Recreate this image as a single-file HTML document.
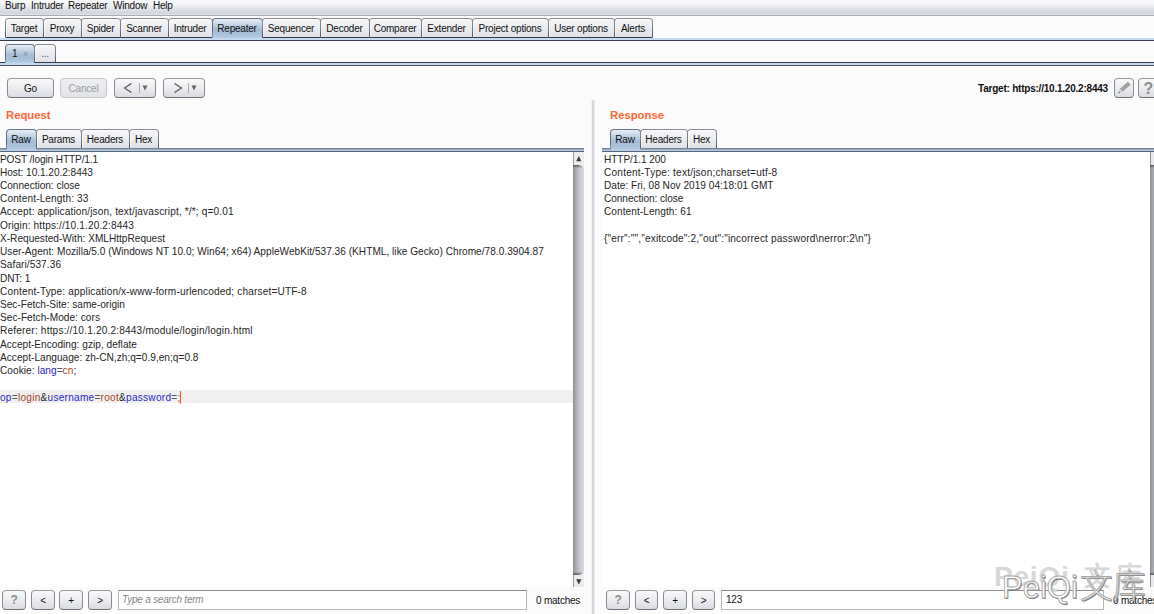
<!DOCTYPE html>
<html lang="en">
<head>
<meta charset="utf-8">
<title>Burp Suite Repeater</title>
<style>
html,body{margin:0;padding:0;}
body{width:1154px;height:614px;overflow:hidden;position:relative;background:#fbfbfb;
  font-family:"Liberation Sans",sans-serif;font-size:10px;letter-spacing:-0.22px;color:#000;}
.abs{position:absolute;}
/* menu bar */
#menubar{left:0;top:0;width:1154px;height:15px;background:linear-gradient(#fafafa 0%,#f6f7f8 15%,#eceef1 38%,#dcdfe4 65%,#d4d7de 85%,#d6d9df 92%,#e2e4e8 100%);border-bottom:1px solid #a9adb6;}
#menubar span{position:absolute;top:0px;font-size:10px;line-height:11px;color:#111;white-space:pre;}
/* tabs */
.tab{position:absolute;box-sizing:border-box;border:1px solid transparent;border-bottom:1px solid #363b4b;border-radius:4px 4px 0 0;
  background:linear-gradient(#f6f7f8 0%,#eceef1 45%,#dfe1e6 100%) padding-box,linear-gradient(#8a8c92 0%,#7a7c86 50%,#4c4e5e 100%) border-box;
  text-align:center;white-space:pre;color:#111;box-shadow:inset 1px 1px 0 rgba(255,255,255,.55);}
.tab.sel{border-bottom:none;box-shadow:none;background:linear-gradient(#e8eef5 0%,#c6d6e7 27%,#a6bcd5 56%,#a9c0d9 80%,#b7cde4 100%) padding-box,linear-gradient(#6a7488 0%,#56607a 60%,#8fa3bd 100%) border-box;}
.mt{top:18px;height:20px;line-height:19px;font-size:10px;padding-right:1px;}
.st{top:44px;height:19px;line-height:17px;font-size:10px;}
.pt{top:129px;height:20px;line-height:19px;font-size:10px;border-bottom-color:#7b8394;padding-right:1px;}
.pt.sel{height:21px;}
.band{position:absolute;height:2px;background:#c3d9ee;}
.dark{position:absolute;height:1px;background:#363b4b;}
/* buttons */
.btn{position:absolute;box-sizing:border-box;border:1px solid #8e9096;border-color:#9a9ca2 #8a8c92 #6e7078;border-radius:4px;
  background:linear-gradient(#f9f9fa 0%,#ebecef 50%,#dadce2 100%);text-align:center;white-space:pre;color:#111;
  box-shadow:0 1px 0 rgba(255,255,255,.8);}
.btn.dis{color:#9a9ca3;background:linear-gradient(#eeeff1,#e1e3e7);border-color:#c3c5ca;}
.title{position:absolute;font-weight:bold;font-size:11.3px;letter-spacing:0;color:#ff6633;line-height:13px;}
/* text areas */
.ta{position:absolute;background:#fff;overflow:hidden;}
.ta pre{margin:0;font-family:"Liberation Sans",sans-serif;font-size:10.1px;line-height:13.22px;color:#262626;white-space:pre;letter-spacing:0;}
.k{color:#2828c8;}
.v{color:#a0481c;}
.q{color:#555;}
.sb{position:absolute;background:linear-gradient(90deg,#9c9fa8 0%,#c6c8ce 30%,#dfe0e4 100%);}
.field{position:absolute;box-sizing:border-box;background:#fff;border:1px solid #b4b6bb;border-top-color:#8b8d93;font-size:10px;line-height:17px;padding-left:4px;}
.lbl{position:absolute;font-size:10px;line-height:11px;white-space:pre;color:#111;}
</style>
</head>
<body>
<!-- menu bar -->
<div id="menubar" class="abs">
  <span style="left:5px">Burp</span><span style="left:31px">Intruder</span><span style="left:68px">Repeater</span><span style="left:113px">Window</span><span style="left:153px">Help</span>
</div>

<!-- main tabs -->
<div class="tab mt" style="left:5px;width:39px">Target</div>
<div class="tab mt" style="left:43px;width:39px">Proxy</div>
<div class="tab mt" style="left:81px;width:40px">Spider</div>
<div class="tab mt" style="left:120px;width:49px">Scanner</div>
<div class="tab mt" style="left:168px;width:45px">Intruder</div>
<div class="tab mt sel" style="left:212px;width:51px">Repeater</div>
<div class="tab mt" style="left:262px;width:59px">Sequencer</div>
<div class="tab mt" style="left:320px;width:50px">Decoder</div>
<div class="tab mt" style="left:369px;width:53px">Comparer</div>
<div class="tab mt" style="left:421px;width:52px">Extender</div>
<div class="tab mt" style="left:472px;width:77px">Project options</div>
<div class="tab mt" style="left:548px;width:67px">User options</div>
<div class="tab mt" style="left:614px;width:39px">Alerts</div>
<div class="band" style="left:0;top:38px;width:1154px;z-index:-1"></div>
<div class="dark" style="left:0;top:40px;width:1154px"></div>

<!-- sub tabs -->
<div class="tab st sel" style="left:5px;width:30px;text-align:left;padding-left:6px">1 <span style="color:#8a8f99;font-size:9px;padding-left:3px">×</span></div>
<div class="tab st" style="left:34px;width:22px;color:#555">...</div>
<div class="dark" style="left:0;top:62px;width:1154px;height:1px;z-index:-1"></div>
<div class="band" style="left:0;top:63px;width:1154px;height:2px;z-index:-1"></div>
<div class="abs" style="left:0;top:65px;width:1154px;height:1px;background:#4a4e5c"></div>
<div class="abs" style="left:0;top:66px;width:1154px;height:1px;background:#fff"></div>

<!-- toolbar buttons -->
<div class="btn" style="left:7px;top:78px;width:47px;height:20px;line-height:19.5px">Go</div>
<div class="btn dis" style="left:60px;top:78px;width:47px;height:20px;line-height:19.5px">Cancel</div>
<div class="btn" style="left:114px;top:78px;width:42px;height:20px;line-height:18px"><svg width="40" height="18" viewBox="0 0 40 18"><path d="M16.5 4.5 L9.5 9 L16.5 13.5" fill="none" stroke="#555" stroke-width="1.2"/><path d="M24.5 4v10" stroke="#aaa" stroke-width="1"/><path d="M27.5 6.5h5l-2.5 5z" fill="#666"/></svg></div>
<div class="btn" style="left:163px;top:78px;width:42px;height:20px;line-height:18px"><svg width="40" height="18" viewBox="0 0 40 18"><path d="M10.5 4.5 L17.5 9 L10.5 13.5" fill="none" stroke="#555" stroke-width="1.2"/><path d="M24.5 4v10" stroke="#aaa" stroke-width="1"/><path d="M27.5 6.5h5l-2.5 5z" fill="#666"/></svg></div>

<!-- target label -->
<div class="lbl" style="left:978px;top:83px;font-weight:bold;font-size:10px">Target: https://10.1.20.2:8443</div>
<div class="btn" style="left:1114px;top:78px;width:20px;height:20px"><svg width="18" height="18" viewBox="0 0 18 18" style="display:block"><path d="M4.83 9.74 L12.93 2.74 L15.67 5.66 L7.57 12.66 Z" fill="#9e9e9e"/><path d="M4.83 9.74 L7.57 12.66 L3.2 14.4 Z" fill="#d4d4d6"/><path d="M4.3 12.2 L5.6 13.5 L3.1 14.6 Z" fill="#777"/><path d="M6.2 8.6 L9 11.4 M8 7 L10.8 9.8 M9.8 5.4 L12.6 8.2 M11.6 3.9 L14.4 6.7" stroke="#b9b9b9" stroke-width="0.5"/></svg></div>
<div class="btn" style="left:1138px;top:78px;width:20px;height:20px;line-height:19px;font-size:16px;font-weight:bold;color:#8c8c8c;text-align:left;padding-left:4.5px;letter-spacing:0">?</div>

<!-- request panel -->
<div class="title" style="left:6px;top:109px">Request</div>
<div class="tab pt sel" style="left:6px;width:31px">Raw</div>
<div class="tab pt" style="left:36px;width:46px">Params</div>
<div class="tab pt" style="left:81px;width:49px">Headers</div>
<div class="tab pt" style="left:129px;width:30px">Hex</div>
<div class="abs" style="left:0;top:148px;width:584px;height:4px;z-index:-1;background:linear-gradient(#7b8394 0,#7b8394 1px,#94a8c2 1px,#94a8c2 2px,#b9cfe6 2px,#b9cfe6 3px,#556277 3px,#556277 4px)"></div>

<div class="ta" style="left:0;top:152px;width:573px;height:435px">
<div class="abs" style="left:0;top:238px;width:573px;height:13px;background:#f0f0f0"></div>
<pre class="abs" style="left:0;top:0.6px"><span style="letter-spacing:-0.11px">POST /login HTTP/1.1</span>
<span style="letter-spacing:-0.04px">Host: 10.1.20.2:8443</span>
<span style="letter-spacing:-0.02px">Connection: close</span>
<span style="letter-spacing:0.115px">Content-Length: 33</span>
<span style="letter-spacing:0.135px">Accept: application/json, text/javascript, */*; q=0.01</span>
<span style="letter-spacing:0.127px">Origin: https://10.1.20.2:8443</span>
<span style="letter-spacing:0.005px">X-Requested-With: XMLHttpRequest</span>
<span style="letter-spacing:0.025px">User-Agent: Mozilla/5.0 (Windows NT 10.0; Win64; x64) AppleWebKit/537.36 (KHTML, like Gecko) Chrome/78.0.3904.87</span>
<span style="letter-spacing:0.08px">Safari/537.36</span>
<span style="letter-spacing:-0.11px">DNT: 1</span>
<span style="letter-spacing:0.148px">Content-Type: application/x-www-form-urlencoded; charset=UTF-8</span>
<span style="letter-spacing:-0.007px">Sec-Fetch-Site: same-origin</span>
<span style="letter-spacing:0.035px">Sec-Fetch-Mode: cors</span>
<span style="letter-spacing:0.177px">Referer: https://10.1.20.2:8443/module/login/login.html</span>
<span style="letter-spacing:0.021px">Accept-Encoding: gzip, deflate</span>
<span style="letter-spacing:0.024px">Accept-Language: zh-CN,zh;q=0.9,en;q=0.8</span>
<span style="letter-spacing:0.045px">Cookie: <span class="k">lang</span><span class="q">=</span><span class="v">cn</span>;</span>

<span style="letter-spacing:0.255px"><span class="k">op</span><span class="q">=</span><span class="v">login</span>&amp;<span class="k">username</span><span class="q">=</span><span class="v">root</span>&amp;<span class="k">password</span><span class="q">=</span><span class="v">;</span><span style="display:inline-block;width:1.4px;height:13px;background:#ff5a20;vertical-align:-3px;margin-left:-1px"></span></span></pre>
</div>
<!-- request scrollbar -->
<div class="abs" style="left:573px;top:152px;width:11px;height:435px;background:#ececef;border-left:1px solid #9a9ca2;box-sizing:border-box"></div>
<div class="abs" style="left:573px;top:165px;width:11px;height:410px;border-radius:0 6px 6px 0 / 0 6px 6px 0;background:linear-gradient(to bottom,#55575c 0,rgba(120,122,128,0) 3px),linear-gradient(to top,#55575c 0,rgba(120,122,128,0) 3px),linear-gradient(90deg,#8e9097 0%,#a9abb2 25%,#c9cbd0 65%,#d8d9dd 100%)"></div>
<svg class="abs" style="left:573px;top:152px" width="11" height="13" viewBox="0 0 11 13"><path d="M5.8 4 L8.4 9.2 L3.2 9.2 Z" fill="#3a3a3e"/></svg>
<svg class="abs" style="left:573px;top:575.7px" width="11" height="12" viewBox="0 0 11 12"><path d="M3.2 3.2 L8.4 3.2 L5.8 8.6 Z" fill="#3a3a3e"/></svg>

<!-- request bottom bar -->
<div class="btn" style="left:2px;top:590px;width:24px;height:20px;line-height:19px;font-weight:bold;color:#8c8c8c;font-size:12px">?</div>
<div class="btn" style="left:31px;top:590px;width:24px;height:20px;line-height:19px">&lt;</div>
<div class="btn" style="left:59px;top:590px;width:24px;height:20px;line-height:19px">+</div>
<div class="btn" style="left:88px;top:590px;width:24px;height:20px;line-height:19px">&gt;</div>
<div class="field" style="left:118px;top:590px;width:409px;height:20px;line-height:18px;color:#888;font-style:italic;padding-left:3px">Type a search term</div>
<div class="lbl" style="left:536px;top:595px">0 matches</div>

<!-- splitter -->
<div class="abs" style="left:592px;top:100px;width:2px;height:514px;background:#d3d6dd;box-shadow:1px 0 0 #ecedf0,-1px 0 0 #f1f2f4"></div>

<!-- response panel -->
<div class="title" style="left:610px;top:109px">Response</div>
<div class="tab pt sel" style="left:610px;width:31px">Raw</div>
<div class="tab pt" style="left:640px;width:48px">Headers</div>
<div class="tab pt" style="left:687px;width:30px">Hex</div>
<div class="abs" style="left:602px;top:148px;width:552px;height:4px;z-index:-1;background:linear-gradient(#7b8394 0,#7b8394 1px,#94a8c2 1px,#94a8c2 2px,#b9cfe6 2px,#b9cfe6 3px,#556277 3px,#556277 4px)"></div>

<div class="ta" style="left:602px;top:152px;width:548px;height:435px">
<pre class="abs" style="left:2px;top:0.6px"><span style="letter-spacing:-0.08px">HTTP/1.1 200</span>
<span style="letter-spacing:0.205px">Content-Type: text/json;charset=utf-8</span>
<span style="letter-spacing:0.018px">Date: Fri, 08 Nov 2019 04:18:01 GMT</span>
<span style="letter-spacing:-0.056px">Connection: close</span>
<span style="letter-spacing:0.065px">Content-Length: 61</span>

<span style="letter-spacing:0.157px">{"err":"","exitcode":2,"out":"incorrect password\nerror:2\n"}</span></pre>
</div>
<div class="abs" style="left:1150px;top:152px;width:4px;height:435px;background:#e9e9ec;border-left:1px solid #8e9096;box-sizing:border-box"></div>
<div class="abs" style="left:1150px;top:165px;width:4px;height:410px;background:linear-gradient(to bottom,#55575c 0,rgba(120,122,128,0) 3px),linear-gradient(to top,#55575c 0,rgba(120,122,128,0) 3px),linear-gradient(90deg,#8e9097,#aeb0b6)"></div>

<!-- response bottom bar -->
<div class="btn" style="left:606px;top:590px;width:24px;height:20px;line-height:19px;font-weight:bold;color:#8c8c8c;font-size:12px">?</div>
<div class="btn" style="left:635px;top:590px;width:23px;height:20px;line-height:19px">&lt;</div>
<div class="btn" style="left:663px;top:590px;width:24px;height:20px;line-height:19px">+</div>
<div class="btn" style="left:692px;top:590px;width:23px;height:20px;line-height:19px">&gt;</div>
<div class="field" style="left:721px;top:590px;width:383px;height:20px;line-height:18px;color:#111;padding-left:4px">123</div>
<div class="lbl" style="left:1113px;top:595px">0 matches</div>

<!-- watermark -->
<div class="abs" style="left:994px;top:556.7px;font-family:'Liberation Sans','Noto Sans CJK SC',sans-serif;font-weight:bold;font-size:28px;line-height:40px;color:#d8d8d8;white-space:pre;letter-spacing:0.8px">PeiQi<span style="font-size:27px;letter-spacing:4.8px;margin-left:14px;font-weight:500">文库</span></div>
<div class="abs" style="left:1002px;top:566.5px;font-family:'Liberation Sans','Noto Sans CJK SC',sans-serif;font-weight:300;font-size:31px;line-height:40px;letter-spacing:0;color:#fff;white-space:pre;-webkit-text-stroke:0.9px #a8a8a8;text-shadow:0.8px 0.8px 0 #6c6c6c">PeiQi<span style="font-size:33px;margin-left:2px">文库</span></div>
</body>
</html>
